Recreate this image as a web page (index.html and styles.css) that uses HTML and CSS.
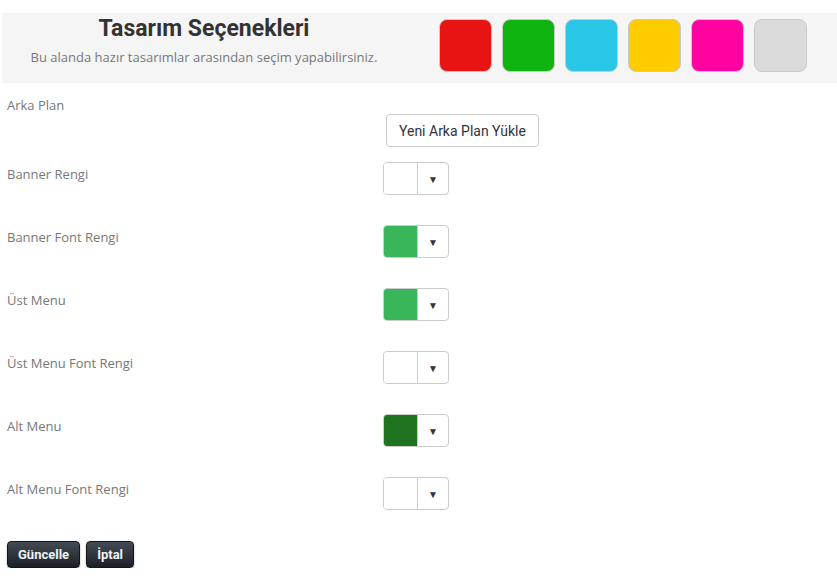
FILE: index.html
```html
<!DOCTYPE html>
<html><head>
    <title>Tasarım Seçenekleri</title>
    <meta charset="UTF-8">
    <meta name="viewport" content="width=device-width, initial-scale=1">
    <link rel="stylesheet" href="styles.css">
    </head>

    <body>
        <div class="page">
            <div class="design-head">
                <div class="head-text">
                    <h1>Tasarım Seçenekleri</h1>
                    <p>Bu alanda hazır tasarımlar arasından seçim yapabilirsiniz.</p>
                </div>
                <div class="themes">
                    <span class="theme red"></span>
                    <span class="theme green"></span>
                    <span class="theme blue"></span>
                    <span class="theme yellow"></span>
                    <span class="theme pink"></span>
                    <span class="theme gray"></span>
                </div>
            </div>

            <form class="design-form">
                <div class="form-row upload-row">
                    <label>Arka Plan</label>
                    <button type="button" class="upload-btn">Yeni Arka Plan Yükle</button>
                </div>

                <div class="form-row">
                    <label>Banner Rengi</label>
                    <div class="picker"><span class="picker-color"></span><span class="picker-arrow">&#9660;</span></div>
                </div>

                <div class="form-row">
                    <label>Banner Font Rengi</label>
                    <div class="picker"><span class="picker-color green-light"></span><span class="picker-arrow">&#9660;</span></div>
                </div>

                <div class="form-row">
                    <label>Üst Menu</label>
                    <div class="picker"><span class="picker-color green-light"></span><span class="picker-arrow">&#9660;</span></div>
                </div>

                <div class="form-row">
                    <label>Üst Menu Font Rengi</label>
                    <div class="picker"><span class="picker-color"></span><span class="picker-arrow">&#9660;</span></div>
                </div>

                <div class="form-row">
                    <label>Alt Menu</label>
                    <div class="picker"><span class="picker-color green-dark"></span><span class="picker-arrow">&#9660;</span></div>
                </div>

                <div class="form-row">
                    <label>Alt Menu Font Rengi</label>
                    <div class="picker"><span class="picker-color"></span><span class="picker-arrow">&#9660;</span></div>
                </div>

                <div class="actions">
                    <button type="submit" class="dark-btn">Güncelle</button>
                    <button type="button" class="dark-btn">İptal</button>
                </div>
            </form>
        </div>
    </body>
</html>
```

FILE: styles.css
```css
html, body {
    margin: 0;
    padding: 0;
    background: #ffffff;
    font-family: "Open Sans", "Liberation Sans", sans-serif;
}

.page {
    padding: 13px 0 0 2px;
}

.design-head {
    display: flex;
    align-items: flex-start;
    height: 70px;
    background: #f5f5f5;
}

.head-text {
    width: 404px;
    text-align: center;
}

.head-text h1 {
    margin: 3px 0 0 0;
    font-family: Roboto, "Liberation Sans", sans-serif;
    font-size: 23px;
    line-height: 26px;
    font-weight: 700;
    color: #333333;
}

.head-text p {
    margin: 6px 0 0 0;
    font-size: 13px;
    line-height: 18px;
    color: #777777;
}

.themes {
    display: flex;
    gap: 10px;
    margin: 6px 0 0 33px;
}

.theme {
    width: 51px;
    height: 51px;
    border: 1px solid #c9c9c9;
    border-radius: 8px;
}

.red { background: #e81313; }
.green { background: #10b410; }
.blue { background: #29c6e6; }
.yellow { background: #ffcc00; }
.pink { background: #ff029f; }
.gray { background: #dcdbdb; }

.design-form {
    padding: 12px 0 0 5px;
}

.form-row {
    display: flex;
    align-items: flex-start;
    margin-bottom: 30px;
}

.form-row label {
    width: 376px;
    padding-top: 2px;
    font-size: 13px;
    line-height: 20px;
    color: #777777;
}

.upload-row {
    margin-bottom: 15px;
}

.upload-row label {
    padding-top: 0;
}

.upload-btn {
    margin: 19px 0 0 3px;
    height: 33px;
    padding: 0 12px;
    background: #ffffff;
    border: 1px solid #cccccc;
    border-radius: 4px;
    font-family: Roboto, "Liberation Sans", sans-serif;
    font-size: 14px;
    color: #333333;
}

.picker {
    display: flex;
    width: 64px;
    height: 31px;
    border: 1px solid #cccccc;
    border-radius: 4px;
    overflow: hidden;
}

.picker-color {
    width: 33px;
    border-right: 1px solid #cccccc;
    background: #ffffff;
}

.green-light { background: #3ab65a; }
.green-dark { background: #1f731e; }

.picker-arrow {
    flex: 1;
    display: flex;
    align-items: center;
    justify-content: center;
    font-size: 10px;
    color: #333333;
}

.actions {
    display: flex;
    gap: 6px;
    padding-top: 1px;
}

.dark-btn {
    height: 27px;
    padding: 0 10px;
    background: linear-gradient(to bottom, #434b53 0%, #1c2126 100%);
    border: 1px solid #121518;
    border-radius: 4px;
    box-shadow: 0 1px 2px rgba(0, 0, 0, 0.35);
    font-family: Roboto, "Liberation Sans", sans-serif;
    font-size: 13px;
    font-weight: 700;
    color: #eef3f6;
}
```
